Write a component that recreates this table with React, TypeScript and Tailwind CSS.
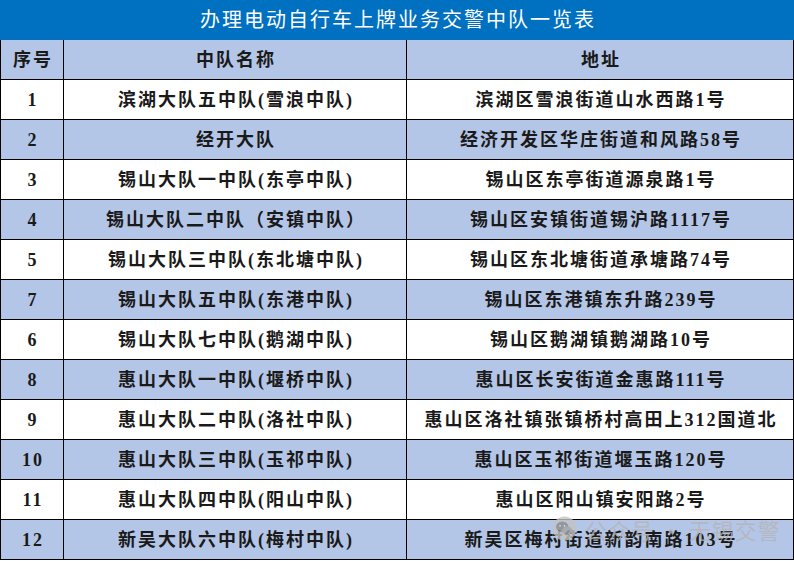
const rows: [string, string, string][] = [
  ["1", "滨湖大队五中队(雪浪中队)", "滨湖区雪浪街道山水西路1号"],
  ["2", "经开大队", "经济开发区华庄街道和风路58号"],
  ["3", "锡山大队一中队(东亭中队)", "锡山区东亭街道源泉路1号"],
  ["4", "锡山大队二中队（安镇中队）", "锡山区安镇街道锡沪路1117号"],
  ["5", "锡山大队三中队(东北塘中队)", "锡山区东北塘街道承塘路74号"],
  ["7", "锡山大队五中队(东港中队)", "锡山区东港镇东升路239号"],
  ["6", "锡山大队七中队(鹅湖中队)", "锡山区鹅湖镇鹅湖路10号"],
  ["8", "惠山大队一中队(堰桥中队)", "惠山区长安街道金惠路111号"],
  ["9", "惠山大队二中队(洛社中队)", "惠山区洛社镇张镇桥村高田上312国道北"],
  ["10", "惠山大队三中队(玉祁中队)", "惠山区玉祁街道堰玉路120号"],
  ["11", "惠山大队四中队(阳山中队)", "惠山区阳山镇安阳路2号"],
  ["12", "新吴大队六中队(梅村中队)", "新吴区梅村街道新韵南路103号"],
]

const font = { fontFamily: '"Liberation Serif", "Noto Sans CJK SC", serif' }

function Row({ cells, shaded }: { cells: string[]; shaded: boolean }) {
  return (
    <div
      className={
        "grid h-[40px] grid-cols-[63px_343px_1fr] border-b border-black " +
        (shaded ? "bg-[#b4c6e7]" : "bg-white")
      }
    >
      <div className="flex items-center justify-center border-r border-black pl-[2px] pt-[2px]">{cells[0]}</div>
      <div className="flex items-center justify-center border-r border-black pl-[2px] pt-[2px]">{cells[1]}</div>
      <div className="flex items-center justify-center pl-[2px] pt-[2px]">{cells[2]}</div>
    </div>
  )
}

// 公众号水印，压在最后一行上面
function Watermark() {
  return (
    <div className="pointer-events-none absolute left-[552px] top-[516px] flex items-center gap-[8px] text-[22px] leading-none tracking-[1px] text-[#b4b4b4]/80">
      <svg width="25" height="25" viewBox="0 0 28 28" className="opacity-80">
        <circle cx="14" cy="14" r="13.5" fill="#c4c4c4" />
        <ellipse cx="11.5" cy="12" rx="7" ry="5.8" fill="#8c8c8c" />
        <ellipse cx="17" cy="16.5" rx="5.8" ry="4.8" fill="#a4a4a4" />
        <circle cx="9" cy="11" r="1" fill="#e0e0e0" />
        <circle cx="14" cy="11" r="1" fill="#e0e0e0" />
      </svg>
      <span style={{ fontFamily: '"Noto Sans CJK SC", sans-serif' }}>公众号 · 无锡交警</span>
    </div>
  )
}

export default function App() {
  return (
    <div className="relative w-[794px] bg-white" style={font}>
      <div className="flex h-[40px] items-center justify-center bg-[#0070c0] pl-[2px] text-[20px] tracking-[2px] text-white">
        办理电动自行车上牌业务交警中队一览表
      </div>
      <div className="border-x border-black text-[18px] font-bold tracking-[2px] text-[#1a1a1a]">
        <Row cells={["序号", "中队名称", "地址"]} shaded />
        {rows.map((r, i) => (
          <Row key={i} cells={r} shaded={i % 2 === 1} />
        ))}
      </div>
      <Watermark />
    </div>
  )
}
